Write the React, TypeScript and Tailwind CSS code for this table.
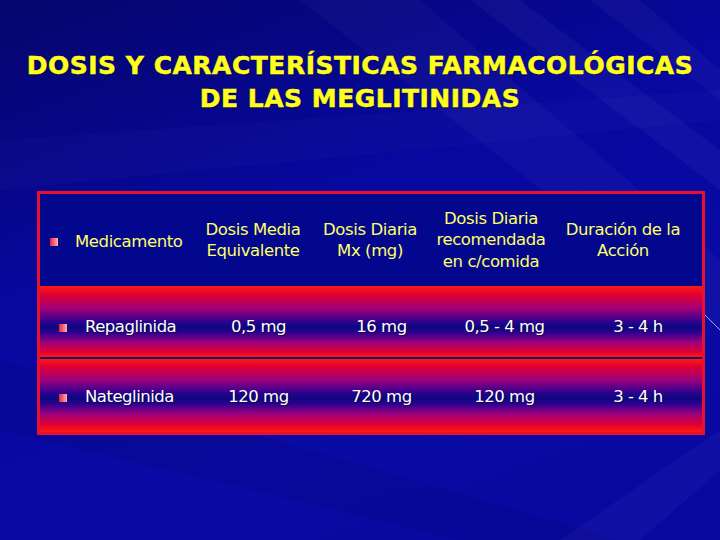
import React from "react";

const font = { fontFamily: '"DejaVu Sans", Verdana, sans-serif' };

function Bullet() {
  return (
    <span className="inline-block w-[8px] h-[8px] shrink-0 bg-[linear-gradient(90deg,#e8203a,#ffb0b8)]" />
  );
}

function Row({ name, cells, grad, pt }: { name: string; cells: string[]; grad: string; pt: string }) {
  return (
    <div className={`grid grid-cols-[157px_123px_123px_123px_1fr] items-center h-full ${grad} ${pt} text-white text-[16.5px] tracking-[-0.5px] [text-shadow:1px_1px_1px_rgba(0,0,0,0.45)]`}>
      <div className="flex items-center pl-[19px]">
        <Bullet />
        <span className="ml-[18px]">{name}</span>
      </div>
      {cells.map((c, i) => (
        <div key={i} className={i === 3 ? "text-center pl-[8px] whitespace-pre" : "text-center"}>
          {c}
        </div>
      ))}
    </div>
  );
}

export default function App() {
  return (
    <div
      className="relative w-[720px] h-[540px] overflow-hidden bg-[linear-gradient(160deg,#05056c_0%,#0708a0_40%,#0a0aa4_70%,#0808a0_100%)]"
      style={font}
    >
      <svg className="absolute inset-0" width="720" height="540" viewBox="0 0 720 540">
        <polygon points="300,0 420,0 720,260 720,330" fill="#ffffff" opacity="0.03" />
        <polygon points="470,0 520,0 720,150 720,190" fill="#ffffff" opacity="0.04" />
        <polygon points="0,140 0,190 720,120 720,90" fill="#ffffff" opacity="0.02" />
        <polygon points="0,360 0,430 460,540 620,540" fill="#000040" opacity="0.1" />
        <polygon points="560,540 720,430 720,470 640,540" fill="#ffffff" opacity="0.03" />
        <line x1="705" y1="315" x2="720" y2="330" stroke="#c8c8ff" strokeWidth="1" opacity="0.8" />
        <polygon points="590,0 640,0 720,70 720,100" fill="#ffffff" opacity="0.035" />
      </svg>

      <div className="relative flex flex-col">
        <div className="pt-[49px] text-center text-[#ffff1a] font-bold text-[25px] leading-[33px] tracking-[0.5px] [-webkit-text-stroke:0.5px_#ffff1a] [text-shadow:1px_1px_1px_rgba(0,0,40,0.6)]">
          <div>DOSIS Y CARACTERÍSTICAS FARMACOLÓGICAS</div>
          <div>DE LAS MEGLITINIDAS</div>
        </div>

        <div className="ml-[37px] mt-[76px] w-[668px] h-[244px] border-[3px] border-[#e8102c] flex flex-col">
          <div className="h-[92px] bg-[#03078e] grid grid-cols-[154px_118px_116px_126px_1fr] items-center text-[#ffff66] text-[16.5px] leading-[21.5px] tracking-[-0.4px]">
            <div className="flex items-center pl-[10px] pt-[4px]">
              <Bullet />
              <span className="ml-[17px]">Medicamento</span>
            </div>
            <div className="text-center">Dosis Media<br />Equivalente</div>
            <div className="text-center">Dosis Diaria<br />Mx (mg)</div>
            <div className="text-center">Dosis Diaria<br />recomendada<br />en c/comida</div>
            <div className="text-center pr-[10px]">Duración de la<br />Acción</div>
          </div>
          <div className="h-[71px]">
            <Row
              name="Repaglinida"
              pt="pt-[12px]"
              grad="bg-[linear-gradient(180deg,#ff1a10_0%,#e00030_12%,#a0007a_32%,#300090_50%,#0a0880_58%,#300090_66%,#a0007a_80%,#e00030_93%,#ff1a10_100%)]"
              cells={["0,5 mg", "16 mg", "0,5 - 4 mg", "3 - 4 h"]}
            />
          </div>
          <div className="h-[2px] bg-[#10087a]" />
          <div className="flex-1">
            <Row
              name="Nateglinida"
              pt="pt-[4px]"
              grad="bg-[linear-gradient(180deg,#ff1a10_0%,#e00030_10%,#a0007a_28%,#300090_46%,#0a0880_54%,#300090_62%,#a0007a_76%,#e00030_90%,#ff1a10_100%)]"
              cells={["120 mg", "720 mg", "120 mg", "3 - 4 h"]}
            />
          </div>
        </div>
      </div>
    </div>
  );
}
